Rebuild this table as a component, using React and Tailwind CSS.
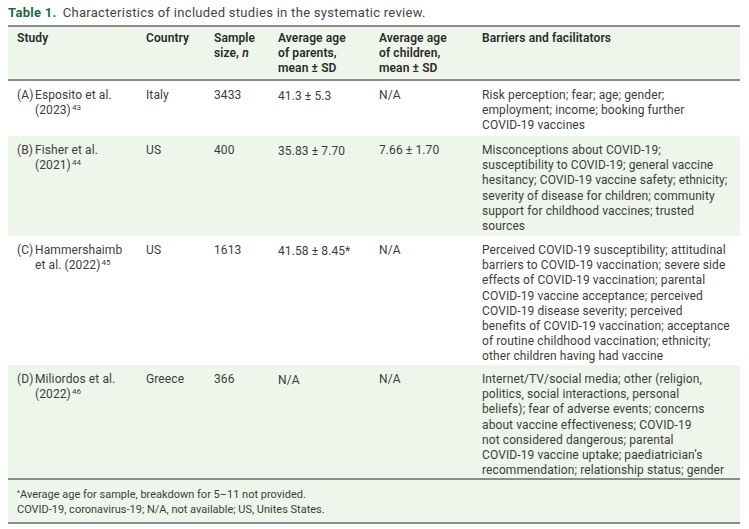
import React from "react";

const rows = [
  {
    id: "A",
    study: ["Esposito et al.", "(2023)"],
    ref: "43",
    country: "Italy",
    n: "3433",
    parents: "41.3 ± 5.3",
    children: "N/A",
    barriers: [
      "Risk perception; fear; age; gender;",
      "employment; income; booking further",
      "COVID-19 vaccines",
    ],
    h: "h-[56px]",
    bg: "bg-white",
  },
  {
    id: "B",
    study: ["Fisher et al.", "(2021)"],
    ref: "44",
    country: "US",
    n: "400",
    parents: "35.83 ± 7.70",
    children: "7.66 ± 1.70",
    barriers: [
      "Misconceptions about COVID-19;",
      "susceptibility to COVID-19; general vaccine",
      "hesitancy; COVID-19 vaccine safety; ethnicity;",
      "severity of disease for children; community",
      "support for childhood vaccines; trusted",
      "sources",
    ],
    h: "h-[100px]",
    bg: "bg-[#eef5ea]",
  },
  {
    id: "C",
    study: ["Hammershaimb", "et al. (2022)"],
    ref: "45",
    country: "US",
    n: "1613",
    parents: "41.58 ± 8.45*",
    children: "N/A",
    barriers: [
      "Perceived COVID-19 susceptibility; attitudinal",
      "barriers to COVID-19 vaccination; severe side",
      "effects of COVID-19 vaccination; parental",
      "COVID-19 vaccine acceptance; perceived",
      "COVID-19 disease severity; perceived",
      "benefits of COVID-19 vaccination; acceptance",
      "of routine childhood vaccination; ethnicity;",
      "other children having had vaccine",
    ],
    h: "h-[129px]",
    bg: "bg-white",
  },
  {
    id: "D",
    study: ["Miliordos et al.", "(2022)"],
    ref: "46",
    country: "Greece",
    n: "366",
    parents: "N/A",
    children: "N/A",
    barriers: [
      "Internet/TV/social media; other (religion,",
      "politics, social interactions, personal",
      "beliefs); fear of adverse events; concerns",
      "about vaccine effectiveness; COVID-19",
      "not considered dangerous; parental",
      "COVID-19 vaccine uptake; paediatrician’s",
      "recommendation; relationship status; gender",
    ],
    h: "h-[111px]",
    bg: "bg-[#eef5ea]",
  },
];

function Lines({ items }) {
  return items.map((t, i) => (
    <div key={i} className="whitespace-nowrap">
      {t}
    </div>
  ));
}

export default function App() {
  return (
    <div
      className="w-[749px] h-[529px] bg-white text-[#3d3d3d] px-2 pt-[5px]"
      style={{ fontFamily: "Roboto, 'Liberation Sans', sans-serif" }}
    >
      <div className="text-[13px] leading-[16px] h-[20px] whitespace-nowrap tracking-[0.3px]">
        <span className="font-bold text-[#1d6a47]">Table 1.</span>
        <span className="ml-[6px] text-[#444]">
          Characteristics of included studies in the systematic review.
        </span>
      </div>

      <table className="w-[732px] table-fixed border-collapse text-[12px] leading-[15.2px] tracking-[0.1px]">
        <colgroup>
          <col className="w-[129px]" />
          <col className="w-[68px]" />
          <col className="w-[64px]" />
          <col className="w-[101px]" />
          <col className="w-[103px]" />
          <col className="w-[267px]" />
        </colgroup>
        <thead>
          <tr className="h-[54px] bg-[#eef5ea] border-t-2 border-b-2 border-[#8c8c8c] align-top text-[#2a2a2a]">
            <th className="text-left font-semibold pl-[9px] pt-[4px]">Study</th>
            <th className="text-left font-semibold pl-[9px] pt-[4px]">Country</th>
            <th className="text-left font-semibold pl-[9px] pt-[4px]">
              <Lines items={["Sample"]} />
              <div className="whitespace-nowrap">
                size, <i>n</i>
              </div>
            </th>
            <th className="text-left font-semibold pl-[9px] pt-[4px]">
              <Lines items={["Average age", "of parents,", "mean ± SD"]} />
            </th>
            <th className="text-left font-semibold pl-[9px] pt-[4px]">
              <Lines items={["Average age", "of children,", "mean ± SD"]} />
            </th>
            <th className="text-left font-semibold pl-[9px] pt-[4px]">
              Barriers and facilitators
            </th>
          </tr>
        </thead>
        <tbody>
          {rows.map((r, idx) => (
            <tr
              key={r.id}
              className={`${r.h} ${r.bg} align-top ${
                idx === rows.length - 1 ? "border-b-2 border-[#8c8c8c]" : ""
              }`}
            >
              <td className="pl-[9px] pt-[7px]">
                <div className="flex">
                  <span className="w-[18px] shrink-0">({r.id})</span>
                  <div className="whitespace-nowrap">
                    <div>{r.study[0]}</div>
                    <div>
                      {r.study[1]}
                      <span className="relative -top-[4px] text-[8px] leading-none ml-[1px]">
                        {r.ref}
                      </span>
                    </div>
                  </div>
                </div>
              </td>
              <td className="pl-[9px] pt-[7px]">{r.country}</td>
              <td className="pl-[9px] pt-[7px]">{r.n}</td>
              <td className="pl-[9px] pt-[8px] whitespace-nowrap">{r.parents}</td>
              <td className="pl-[9px] pt-[7px] whitespace-nowrap">{r.children}</td>
              <td className="pl-[9px] pt-[7px]">
                <Lines items={r.barriers} />
              </td>
            </tr>
          ))}
          <tr className="h-[44px] bg-[#eef5ea] border-b-2 border-[#8c8c8c] align-top">
            <td colSpan={6} className="pl-[9px] pt-[7px] text-[11px] leading-[15px] tracking-normal">
              <div className="whitespace-nowrap">
                <span className="relative -top-[3px] text-[7px] leading-none">*</span>
                Average age for sample, breakdown for 5–11 not provided.
              </div>
              <div className="whitespace-nowrap">
                COVID-19, coronavirus-19; N/A, not available; US, Unites States.
              </div>
            </td>
          </tr>
        </tbody>
      </table>
    </div>
  );
}
